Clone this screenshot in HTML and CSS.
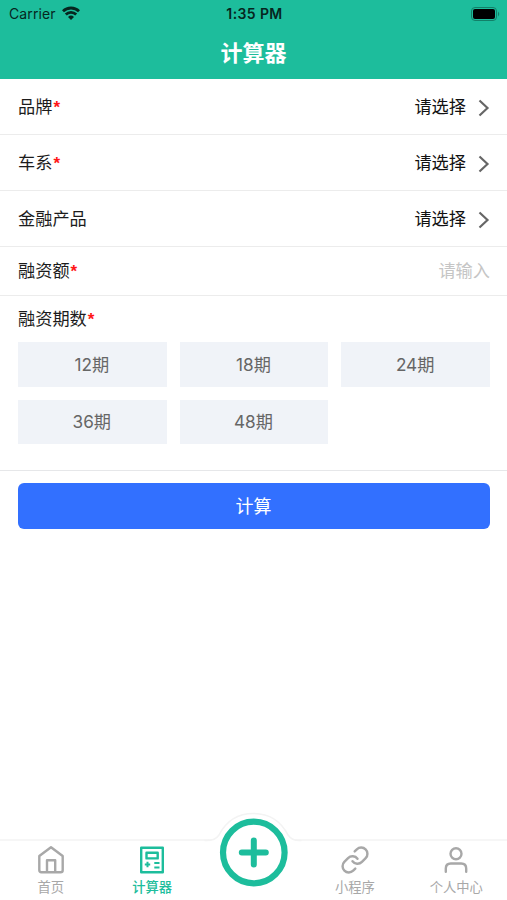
FILE: index.html
```html
<!DOCTYPE html>
<html lang="zh-CN">
<head>
<meta charset="utf-8">
<title>计算器</title>
<link rel="stylesheet" href="styles.css">
</head>
<body>
<div class="app">
  <header class="header">
    <div class="status">
      <div class="carrier"><span>Carrier</span>
        <svg class="wifi" width="18" height="14" viewBox="0 0 18 14" fill="none" stroke="#06261f" stroke-width="2.8"><path d="M1 5.3a11.4 11.4 0 0 1 16 0M3.8 8.6a7.4 7.4 0 0 1 10.4 0"/><path d="M9 14 6 11a4.3 4.3 0 0 1 6 0z" fill="#06261f" stroke="none"/></svg>
      </div>
      <div class="time">1:35 PM</div>
      <svg class="battery" width="30" height="14" viewBox="0 0 30 14"><rect x=".5" y=".5" width="25" height="13" rx="3.5" fill="none" stroke="#128068"/><rect x="2" y="2" width="22" height="10" rx="2" fill="#000"/><path d="M27 4.5q2.5 2.5 0 5z" fill="#128068"/></svg>
    </div>
    <h1 class="title">计算器</h1>
  </header>
  <main class="form">
    <div class="row"><span class="label">品牌<i>*</i></span><span class="value">请选择</span><svg class="chevron" width="12" height="18" viewBox="0 0 12 18"><path d="M1.5 1.5 9.5 9l-8 7.5"/></svg></div>
    <div class="row"><span class="label">车系<i>*</i></span><span class="value">请选择</span><svg class="chevron" width="12" height="18" viewBox="0 0 12 18"><path d="M1.5 1.5 9.5 9l-8 7.5"/></svg></div>
    <div class="row"><span class="label">金融产品</span><span class="value">请选择</span><svg class="chevron" width="12" height="18" viewBox="0 0 12 18"><path d="M1.5 1.5 9.5 9l-8 7.5"/></svg></div>
    <div class="row row-input"><span class="label">融资额<i>*</i></span><span class="placeholder">请输入</span></div>
    <section class="terms">
      <div class="label">融资期数<i>*</i></div>
      <div class="grid">
        <div class="term">12期</div><div class="term">18期</div><div class="term">24期</div>
        <div class="term">36期</div><div class="term">48期</div>
      </div>
    </section>
    <button class="submit">计算</button>
  </main>
  <nav class="tabs">
    <div class="tab">
      <svg width="30" height="30" viewBox="0 0 30 30"><path d="M15 2.2 26.7 11v14.2q0 2-2 2H5.3q-2 0-2-2V11zM11 27V15.2h8.2V27"/></svg>
      <span>首页</span>
    </div>
    <div class="tab active">
      <svg width="30" height="30" viewBox="0 0 30 30"><path d="M4.2 2.7h21.6v24.5H4.2zM9.5 7.8h11.2v5.6H9.5z"/><path class="keys" d="M7.8 19.5h5.4M10.5 16.8v5.4M17.3 18h5.2M17.3 22.6h5.2"/></svg>
      <span>计算器</span>
    </div>
    <div class="tab add">
      <svg class="add-icon" width="80" height="76" viewBox="0 0 80 76"><path d="M-8 28.5Q2 29 6 23Q17 1.5 40.5 1.5Q64 1.5 75 23Q79 29 88 28.5V36H-8z" fill="#fff" stroke="none"/><path d="M-8 28.5Q2 29 6 23Q17 1.5 40.5 1.5Q64 1.5 75 23Q79 29 88 28.5" class="rim"/><circle cx="40.8" cy="40.5" r="30.8" fill="#fff" stroke-width="6.2"/><path d="M28.8 40.5h24M40.8 28.5v24" stroke-width="6"/></svg>
    </div>
    <div class="tab">
      <svg width="30" height="30" viewBox="0 0 24 24"><path stroke-width="1.95" d="M10 13a5 5 0 0 0 7.54.54l3-3a5 5 0 0 0-7.07-7.07l-1.72 1.71M14 11a5 5 0 0 0-7.54-.54l-3 3a5 5 0 0 0 7.07 7.07l1.71-1.71"/></svg>
      <span>小程序</span>
    </div>
    <div class="tab">
      <svg width="30" height="30" viewBox="0 0 30 30"><circle cx="15" cy="8.8" r="5.5"/><path d="M4.8 26.7v-3.2q0-5 5-5h10.4q5 0 5 5v3.2"/></svg>
      <span>个人中心</span>
    </div>
  </nav>
</div>
</body>
</html>
```

FILE: styles.css
```css
* { box-sizing: border-box; }
body {
  margin: 0;
  background: #fff;
  color: #1c1c1c;
  font: 17.2px/24px Inter, "Noto Sans CJK SC", sans-serif;
}
.app { display: flex; flex-direction: column; height: 900px; overflow: hidden; }
.header { height: 79px; background: #1dbd9c; }
.status {
  display: grid;
  grid-template-columns: 1fr auto 1fr;
  align-items: center;
  height: 27px;
  padding: 0 6px 0 9px;
  color: #06261f;
  font-size: 14px;
}
.carrier { display: flex; align-items: center; gap: 6px; letter-spacing: .1px; }
.wifi { margin-top: -2px; }
.time { font-size: 14px; font-weight: 600; letter-spacing: .4px; padding-right: 1px; }
.battery { justify-self: end; }
.title {
  margin: 11px 0 0;
  color: #fff;
  font-size: 22px;
  line-height: 30px;
  font-weight: 600;
  text-align: center;
}
.form { flex: 1; }
.row {
  display: flex;
  align-items: center;
  height: 56px;
  padding: 0 17px 0 18px;
  border-bottom: 1px solid #ececec;
}
.row-input { height: 49px; }
.label { flex: 1; line-height: 24px; }
.label i {
  margin-left: 1px;
  color: #ff1616;
  font: 700 17px/1 "Liberation Sans", sans-serif;
}
.value { color: #111; }
.chevron {
  margin: 2px 0 0 12px;
  fill: none;
  stroke: #666;
  stroke-width: 2.2;
}
.placeholder { color: #c5c5c5; }
.terms { height: 175px; padding: 11px 17px 0 18px; border-bottom: 1px solid #e6e7e9; }
.grid {
  display: grid;
  grid-template-columns: repeat(3, 1fr);
  grid-auto-rows: 44.5px;
  gap: 13px;
  margin-top: 11px;
}
.term {
  display: flex;
  align-items: center;
  justify-content: center;
  padding: 1px 1px 0 0;
  background: #f0f3f8;
  color: #666;
}
.submit {
  display: block;
  width: 472px;
  height: 46px;
  margin: 12px 0 0 18px;
  padding: 2px 1px 0 0;
  border: 0;
  border-radius: 6px;
  background: #3270ff;
  color: #fff;
  font: inherit;
  font-size: 18px;
}
.tabs {
  display: grid;
  grid-template-columns: repeat(5, 1fr);
  height: 61px;
  border-top: 2px solid #f6f6f6;
}
.tab {
  display: flex;
  flex-direction: column;
  align-items: center;
  padding-top: 4px;
  color: #a8a8a8;
  font-size: 13.3px;
  line-height: 20px;
}
.tab svg {
  flex: none;
  fill: none;
  stroke: currentColor;
  stroke-width: 2.4;
  stroke-linecap: round;
  stroke-linejoin: round;
}
.tab span { margin-top: 2px; white-space: nowrap; }
.active { color: #1dbd9c; font-weight: 500; }
.tab .keys { stroke-width: 2; stroke-linecap: butt; }
.add { color: #1dbd9c; padding: 0; }
.add .add-icon { margin-top: -29px; overflow: visible; }
.add .rim { stroke: #f3f3f3; stroke-width: 1.5; }
```
